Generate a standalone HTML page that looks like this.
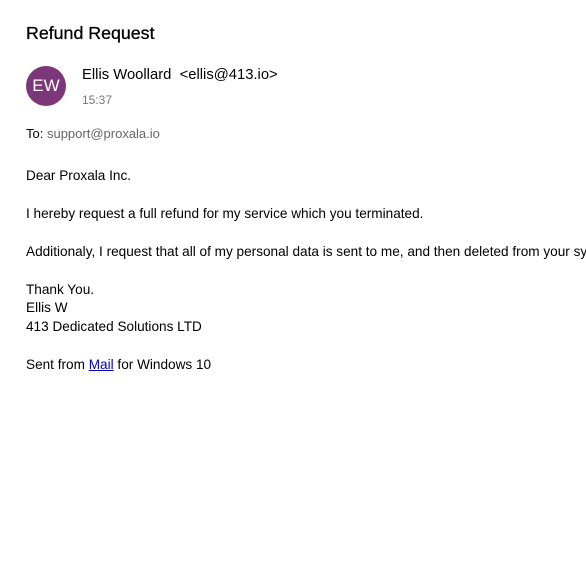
<!DOCTYPE html>
<html><head><style>
body{margin:0;width:586px;height:567px;background:#fff;font-family:"Liberation Sans",sans-serif;color:#000;overflow:hidden;position:relative}
.a{position:absolute;white-space:nowrap}
.b{font-size:13.6px}
</style></head><body>
<div class="a" style="left:26px;top:23px;font-size:17.8px;-webkit-text-stroke:0.3px #000">Refund Request</div>
<div class="a" style="left:26px;top:66px;width:40px;height:40px;border-radius:50%;background:#7b3778;color:#fff;font-size:17px;line-height:40px;text-align:center">EW</div>
<div class="a" style="left:82px;top:67px;font-size:14.8px">Ellis Woollard&nbsp; &lt;ellis@413.io&gt;</div>
<div class="a" style="left:82px;top:93px;font-size:12px;color:#777">15:37</div>
<div class="a" style="left:26px;top:126px;font-size:13px">To: <span style="color:#666">support@proxala.io</span></div>
<div class="a b" style="left:26px;top:168px">Dear Proxala Inc.</div>
<div class="a b" style="left:26px;top:206px">I hereby request a full refund for my service which you terminated.</div>
<div class="a b" style="left:26px;top:244px">Additionaly, I request that all of my personal data is sent to me, and then deleted from your systems.</div>
<div class="a b" style="left:26px;top:282px">Thank You.</div>
<div class="a b" style="left:26px;top:300px">Ellis W</div>
<div class="a b" style="left:26px;top:319px">413 Dedicated Solutions LTD</div>
<div class="a b" style="left:26px;top:357px">Sent from <span style="color:#00c;text-decoration:underline">Mail</span> for Windows 10</div>
</body></html>
